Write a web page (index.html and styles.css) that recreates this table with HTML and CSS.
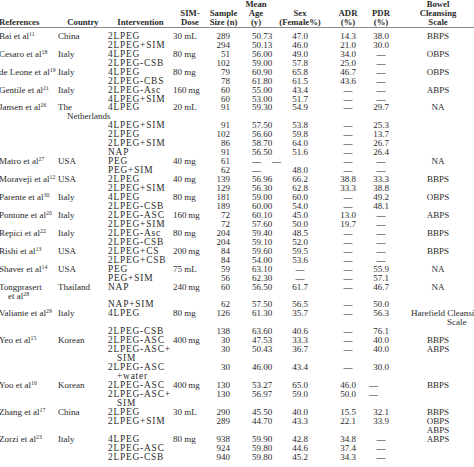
FILE: index.html
```html
<!DOCTYPE html>
<html>
<head>
<meta charset="utf-8">
<link rel="stylesheet" href="styles.css">
</head>
<body>
<table class="tbl">
<colgroup>
<col class="c-ref"><col class="c-cty"><col class="c-int"><col class="c-dose"><col class="c-n"><col class="c-age"><col class="c-sex"><col class="c-adr"><col class="c-pdr"><col class="c-bow">
</colgroup>
<thead>
<tr><th></th><th></th><th></th><th></th><th></th><th>Mean</th><th></th><th></th><th></th><th>Bowel</th></tr>
<tr><th></th><th></th><th></th><th>SIM-</th><th>Sample</th><th>Age</th><th>Sex</th><th>ADR</th><th>PDR</th><th>Cleansing</th></tr>
<tr class="hlast"><th class="l">References</th><th>Country</th><th>Intervention</th><th>Dose</th><th>Size (n)</th><th>(y)</th><th>(Female%)</th><th>(%)</th><th>(%)</th><th>Scale</th></tr>
</thead>
<tbody>
<tr class="gap"><td colspan="10"></td></tr>
<tr><td>Bai et al<sup>11</sup></td><td>China</td><td>2LPEG</td><td>30 mL</td><td>289</td><td>50.73</td><td>47.0</td><td>14.3</td><td>38.0</td><td>BBPS</td></tr>
<tr><td></td><td></td><td>2LPEG+SIM</td><td></td><td>294</td><td>50.13</td><td>46.0</td><td>21.0</td><td>30.0</td><td></td></tr>
<tr><td>Cesaro et al<sup>18</sup></td><td>Italy</td><td>4LPEG</td><td>80 mg</td><td>51</td><td>56.00</td><td>49.0</td><td>34.0</td><td>—</td><td>OBPS</td></tr>
<tr><td></td><td></td><td>2LPEG-CSB</td><td></td><td>102</td><td>59.00</td><td>57.8</td><td>25.0</td><td>—</td><td></td></tr>
<tr><td>de Leone et al<sup>19</sup></td><td>Italy</td><td>4LPEG</td><td>80 mg</td><td>79</td><td>60.90</td><td>65.8</td><td>46.7</td><td>—</td><td>OBPS</td></tr>
<tr><td></td><td></td><td>2LPEG-CBS</td><td></td><td>78</td><td>61.80</td><td>61.5</td><td>43.6</td><td>—</td><td></td></tr>
<tr><td>Gentile et al<sup>21</sup></td><td>Italy</td><td>2LPEG-Asc</td><td>160&thinsp;mg</td><td>60</td><td>55.00</td><td>43.4</td><td>—</td><td>—</td><td>ABPS</td></tr>
<tr><td></td><td></td><td>4LPEG+SIM</td><td></td><td>60</td><td>53.00</td><td>51.7</td><td>—</td><td>—</td><td></td></tr>
<tr><td>Jansen et al<sup>26</sup></td><td>The</td><td>4LPEG</td><td>20 mL</td><td>91</td><td>59.30</td><td>54.9</td><td>—</td><td>29.7</td><td>NA</td></tr>
<tr><td></td><td class="ind">Netherlands</td><td></td><td></td><td></td><td></td><td></td><td></td><td></td><td></td></tr>
<tr><td></td><td></td><td>4LPEG+SIM</td><td></td><td>91</td><td>57.50</td><td>53.8</td><td>—</td><td>25.3</td><td></td></tr>
<tr><td></td><td></td><td>2LPEG</td><td></td><td>102</td><td>56.60</td><td>59.8</td><td>—</td><td>13.7</td><td></td></tr>
<tr><td></td><td></td><td>2LPEG+SIM</td><td></td><td>86</td><td>58.70</td><td>64.0</td><td>—</td><td>26.7</td><td></td></tr>
<tr><td></td><td></td><td>NAP</td><td></td><td>91</td><td>56.50</td><td>51.6</td><td>—</td><td>26.4</td><td></td></tr>
<tr><td>Matro et al<sup>27</sup></td><td>USA</td><td>PEG</td><td>40 mg</td><td>61</td><td>—<span class="dash2">—</span></td><td></td><td>—</td><td>—</td><td>NA</td></tr>
<tr><td></td><td></td><td>PEG+SIM</td><td></td><td>62</td><td>—</td><td>48.0</td><td>—</td><td>—</td><td></td></tr>
<tr><td>Moraveji et al<sup>12</sup></td><td>USA</td><td>2LPEG</td><td>40 mg</td><td>139</td><td>56.96</td><td>66.2</td><td>38.8</td><td>33.3</td><td>BBPS</td></tr>
<tr><td></td><td></td><td>2LPEG+SIM</td><td></td><td>129</td><td>56.30</td><td>62.8</td><td>33.3</td><td>38.8</td><td></td></tr>
<tr><td>Parente et al<sup>30</sup></td><td>Italy</td><td>4LPEG</td><td>80 mg</td><td>181</td><td>59.00</td><td>60.0</td><td>—</td><td>49.2</td><td>OBPS</td></tr>
<tr><td></td><td></td><td>2LPEG-CSB</td><td></td><td>189</td><td>60.00</td><td>54.0</td><td>—</td><td>48.1</td><td></td></tr>
<tr><td>Pontone et al<sup>20</sup></td><td>Italy</td><td>2LPEG-ASC</td><td>160&thinsp;mg</td><td>72</td><td>60.10</td><td>45.0</td><td>13.0</td><td>—</td><td>ABPS</td></tr>
<tr><td></td><td></td><td>2LPEG+SIM</td><td></td><td>72</td><td>57.60</td><td>50.0</td><td>19.7</td><td>—</td><td></td></tr>
<tr><td>Repici et al<sup>22</sup></td><td>Italy</td><td>2LPEG-Asc</td><td>80 mg</td><td>204</td><td>59.40</td><td>48.5</td><td>—</td><td>—</td><td>BBPS</td></tr>
<tr><td></td><td></td><td>2LPEG-CSB</td><td></td><td>204</td><td>59.10</td><td>52.0</td><td>—</td><td>—</td><td></td></tr>
<tr><td>Rishi et al<sup>13</sup></td><td>USA</td><td>2LPEG+CS</td><td>200&thinsp;mg</td><td>84</td><td>59.60</td><td>59.5</td><td>—</td><td>—</td><td>BBPS</td></tr>
<tr><td></td><td></td><td>2LPEG+CSB</td><td></td><td>84</td><td>54.00</td><td>53.6</td><td>—</td><td>—</td><td></td></tr>
<tr><td>Shaver et al<sup>14</sup></td><td>USA</td><td>PEG</td><td>75 mL</td><td>59</td><td>63.10</td><td>—</td><td>—</td><td>55.9</td><td>NA</td></tr>
<tr><td></td><td></td><td>PEG+SIM</td><td></td><td>56</td><td>62.30</td><td>—</td><td>—</td><td>57.1</td><td></td></tr>
<tr><td>Tongprasert</td><td>Thailand</td><td>NAP</td><td>240&thinsp;mg</td><td>60</td><td>56.50</td><td>61.7</td><td>—</td><td>46.7</td><td>NA</td></tr>
<tr><td class="ind2">et al<sup>28</sup></td><td></td><td></td><td></td><td></td><td></td><td></td><td></td><td></td><td></td></tr>
<tr><td></td><td></td><td>NAP+SIM</td><td></td><td>62</td><td>57.50</td><td>56.5</td><td>—</td><td>50.0</td><td></td></tr>
<tr><td>Valiante et al<sup>29</sup></td><td>Italy</td><td>4LPEG</td><td>80 mg</td><td>126</td><td>61.30</td><td>35.7</td><td>—</td><td>56.3</td><td class="hare">Harefield Cleansing</td></tr>
<tr><td></td><td></td><td></td><td></td><td></td><td></td><td></td><td></td><td></td><td class="hare2">Scale</td></tr>
<tr><td></td><td></td><td>2LPEG-CSB</td><td></td><td>138</td><td>63.60</td><td>40.6</td><td>—</td><td>76.1</td><td></td></tr>
<tr><td>Yeo et al<sup>15</sup></td><td>Korean</td><td>2LPEG-ASC</td><td>400&thinsp;mg</td><td>30</td><td>47.53</td><td>33.3</td><td>—</td><td>40.0</td><td>BBPS</td></tr>
<tr><td></td><td></td><td>2LPEG-ASC+</td><td></td><td>30</td><td>50.43</td><td>36.7</td><td>—</td><td>40.0</td><td>ABPS</td></tr>
<tr><td></td><td></td><td class="ind">SIM</td><td></td><td></td><td></td><td></td><td></td><td></td><td></td></tr>
<tr><td></td><td></td><td>2LPEG-ASC</td><td></td><td>30</td><td>46.00</td><td>43.4</td><td>—</td><td>30.0</td><td></td></tr>
<tr><td></td><td></td><td class="ind">+water</td><td></td><td></td><td></td><td></td><td></td><td></td><td></td></tr>
<tr><td>Yoo et al<sup>16</sup></td><td>Korean</td><td>2LPEG-ASC</td><td>400&thinsp;mg</td><td>130</td><td>53.27</td><td>65.0</td><td>46.0</td><td class="pl">—</td><td>BBPS</td></tr>
<tr><td></td><td></td><td>2LPEG-ASC+</td><td></td><td>130</td><td>56.97</td><td>59.0</td><td>50.0</td><td class="pl">—</td><td></td></tr>
<tr><td></td><td></td><td class="ind">SIM</td><td></td><td></td><td></td><td></td><td></td><td></td><td></td></tr>
<tr><td>Zhang et al<sup>17</sup></td><td>China</td><td>2LPEG</td><td>30 mL</td><td>290</td><td>45.50</td><td>40.0</td><td>15.5</td><td>32.1</td><td>BBPS</td></tr>
<tr><td></td><td></td><td>2LPEG+SIM</td><td></td><td>289</td><td>44.70</td><td>43.3</td><td>22.1</td><td>33.9</td><td>OBPS</td></tr>
<tr><td></td><td></td><td></td><td></td><td></td><td></td><td></td><td></td><td></td><td>ABPS</td></tr>
<tr><td>Zorzi et al<sup>23</sup></td><td>Italy</td><td>4LPEG</td><td>80 mg</td><td>938</td><td>59.90</td><td>42.8</td><td>34.8</td><td>—</td><td>ABPS</td></tr>
<tr><td></td><td></td><td>2LPEG-ASC</td><td></td><td>924</td><td>59.80</td><td>44.6</td><td>37.4</td><td>—</td><td></td></tr>
<tr><td></td><td></td><td>2LPEG-CSB</td><td></td><td>940</td><td>59.80</td><td>45.2</td><td>34.3</td><td>—</td><td></td></tr>
</tbody>
</table>
</body>
</html>
```

FILE: styles.css
```css
html, body {
  margin: 0;
  padding: 0;
  background: #ffffff;
  width: 474px;
  height: 467px;
  overflow: hidden;
}

.tbl {
  border-collapse: collapse;
  table-layout: fixed;
  width: 483px;
  margin-left: -1px;
  font-family: "Liberation Serif", "Times New Roman", serif;
  font-size: 9px;
  line-height: 8.95px;
  color: #2a2a2a;
}

.c-ref { width: 59px; }
.c-cty { width: 50px; }
.c-int { width: 65px; }
.c-dose { width: 34px; }
.c-n { width: 33px; }
.c-age { width: 32px; }
.c-sex { width: 56px; }
.c-adr { width: 40px; }
.c-pdr { width: 26px; }
.c-bow { width: 88px; }

.tbl th,
.tbl td {
  padding: 0;
  height: 8.95px;
  white-space: nowrap;
  overflow: visible;
  vertical-align: top;
}

.tbl th {
  font-weight: bold;
  font-size: 8.7px;
  text-align: center;
}

.tbl th.l {
  text-align: left;
}

.hlast th {
  border-bottom: 1px solid #8a8a8a;
}

.tbl tr.gap td {
  height: 4px;
  line-height: 4px;
}

.tbl td:nth-child(1),
.tbl td:nth-child(2),
.tbl td:nth-child(4) {
  text-align: left;
}

.tbl td:nth-child(3) {
  text-align: left;
  font-size: 9.4px;
  letter-spacing: 0.8px;
}

.tbl td:nth-child(5) {
  text-align: right;
  padding-right: 10px;
}

.tbl td:nth-child(6) {
  text-align: left;
  padding-left: 12px;
}

.tbl td:nth-child(7),
.tbl td:nth-child(8),
.tbl td:nth-child(9),
.tbl td:nth-child(10) {
  text-align: center;
}

.tbl td.ind {
  padding-left: 9px;
}

.tbl td.ind2 {
  padding-left: 9px;
}

.tbl td.pl {
  text-align: left;
  padding-left: 1px;
}

.tbl td.hare {
  text-align: left;
  padding-left: 17px;
}

.tbl td.hare2 {
  text-align: left;
  padding-left: 53px;
}

.dash2 {
  margin-left: 11px;
}

sup {
  font-size: 5.8px;
  line-height: 0;
  vertical-align: 3px;
}
```
